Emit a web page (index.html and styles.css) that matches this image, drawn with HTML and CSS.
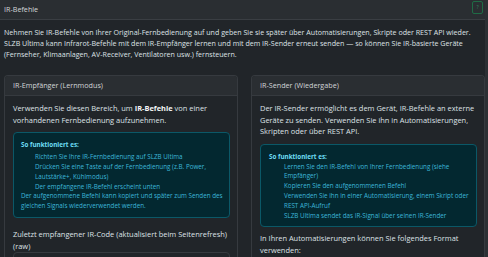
FILE: index.html
```html
<!DOCTYPE html>
<html lang="de">
<head>
<meta charset="utf-8">
<link rel="stylesheet" href="styles.css">
</head>
<body>
<div class="page">
  <div class="main-head">
    <span>IR-Befehle</span>
    <button class="help-btn" type="button">?</button>
  </div>
  <div class="main-body">
    <p class="intro">Nehmen Sie IR-Befehle von Ihrer Original-Fernbedienung auf und geben Sie sie später über Automatisierungen, Skripte oder REST API wieder.<br>SLZB Ultima kann Infrarot-Befehle mit dem IR-Empfänger lernen und mit dem IR-Sender erneut senden — so können Sie IR-basierte Geräte<br>(Fernseher, Klimaanlagen, AV-Receiver, Ventilatoren usw.) fernsteuern.</p>
    <div class="cols">
      <section class="card">
        <div class="card-head">IR-Empfänger (Lernmodus)</div>
        <div class="card-body">
          <p class="lead">Verwenden Sie diesen Bereich, um <b>IR-Befehle</b> von einer<br>vorhandenen Fernbedienung aufzunehmen.</p>
          <div class="alert alert-left">
            <div class="alert-title">So funktioniert es:</div>
            <ol class="steps">
              <li>Richten Sie Ihre IR-Fernbedienung auf SLZB Ultima</li>
              <li>Drücken Sie eine Taste auf der Fernbedienung (z.B. Power,<br>Lautstärke+, Kühlmodus)</li>
              <li>Der empfangene IR-Befehl erscheint unten</li>
            </ol>
            <p class="note">Der aufgenommene Befehl kann kopiert und später zum Senden des<br>gleichen Signals wiederverwendet werden.</p>
          </div>
          <label class="field-label">Zuletzt empfangener IR-Code (aktualisiert beim Seitenrefresh)<br>(raw)</label>
          <div class="code-box"></div>
        </div>
      </section>
      <section class="card">
        <div class="card-head">IR-Sender (Wiedergabe)</div>
        <div class="card-body">
          <p class="lead">Der IR-Sender ermöglicht es dem Gerät, IR-Befehle an externe<br>Geräte zu senden. Verwenden Sie ihn in Automatisierungen,<br>Skripten oder über REST API.</p>
          <div class="alert alert-right">
            <div class="alert-title">So funktioniert es:</div>
            <ol class="steps">
              <li>Lernen Sie den IR-Befehl von Ihrer Fernbedienung (siehe<br>Empfänger)</li>
              <li>Kopieren Sie den aufgenommenen Befehl</li>
              <li>Verwenden Sie ihn in einer Automatisierung, einem Skript oder<br>REST API-Aufruf</li>
              <li>SLZB Ultima sendet das IR-Signal über seinen IR-Sender</li>
            </ol>
          </div>
          <p class="lead">In Ihren Automatisierungen können Sie folgendes Format<br>verwenden:</p>
        </div>
      </section>
    </div>
  </div>
</div>
</body>
</html>
```

FILE: styles.css
```css
html, body {
  margin: 0;
  padding: 0;
  background: #212529;
  height: 257px;
  overflow: hidden;
}
body {
  font-family: "Open Sans", "Noto Sans", sans-serif;
  color: #dee2e6;
  font-size: 7.3px;
  line-height: 11px;
}
.page {
  border-right: 3px solid #2c3034;
  height: 257px;
  overflow: hidden;
}
.main-head {
  height: 19px;
  border-bottom: 1px solid #3a3e43;
  background: #2a2e32;
  display: flex;
  align-items: center;
  justify-content: space-between;
  padding: 0 2px 0 4px;
  color: #d2d5d8;
  font-size: 7.2px;
}
.help-btn {
  width: 11px;
  height: 13px;
  margin-top: -5px;
  padding: 0;
  border: 1px solid #1f6b45;
  border-radius: 2px;
  background: transparent;
  color: #2e8b5c;
  font-family: "Open Sans", sans-serif;
  font-size: 5px;
  line-height: 11px;
}
.main-body {
  padding: 7px 0 0 4px;
}
.intro {
  margin: 0 0 16px;
  font-size: 7.1px;
  line-height: 10.8px;
  white-space: nowrap;
}
.cols {
  display: flex;
  gap: 13px;
}
.card {
  flex: 1;
  border: 1px solid #363a3f;
  border-bottom: 0;
  border-radius: 4px 4px 0 0;
  background: #212529;
  height: 181px;
  overflow: hidden;
}
.card-head {
  height: 19px;
  line-height: 19px;
  padding: 0 8px;
  background: #2a2e32;
  border-bottom: 1px solid #363a3f;
  color: #d2d5d8;
  font-size: 7.2px;
}
.card-body {
  padding: 7px 7px 0 8px;
}
.lead {
  margin: 0 0 6px;
  font-size: 7.45px;
  line-height: 11.5px;
  white-space: nowrap;
}
b {
  color: #f4f5f6;
}
.alert {
  background: #032830;
  border: 1px solid #0b5867;
  border-radius: 4px;
  font-size: 6.3px;
  line-height: 9.8px;
  color: #3cb6d8;
  white-space: nowrap;
}
.alert-left {
  padding: 7px 7px 6px 7px;
  margin-bottom: 10px;
}
.alert-right {
  padding: 7px 8px 6px 8px;
  margin-bottom: 6px;
}
.alert-title {
  font-weight: 700;
  color: #6edff6;
  margin-bottom: 2px;
}
.alert-right .alert-title {
  margin-bottom: 0;
}
.steps {
  list-style: none;
  margin: 0;
  padding-left: 14px;
}
.alert-right .steps {
  padding-left: 15px;
}
.note {
  margin: 0;
}
.field-label {
  display: block;
  font-size: 7.45px;
  line-height: 12px;
  white-space: nowrap;
}
.code-box {
  height: 20px;
  border: 1px solid #363a3f;
  border-radius: 4px;
}
```
